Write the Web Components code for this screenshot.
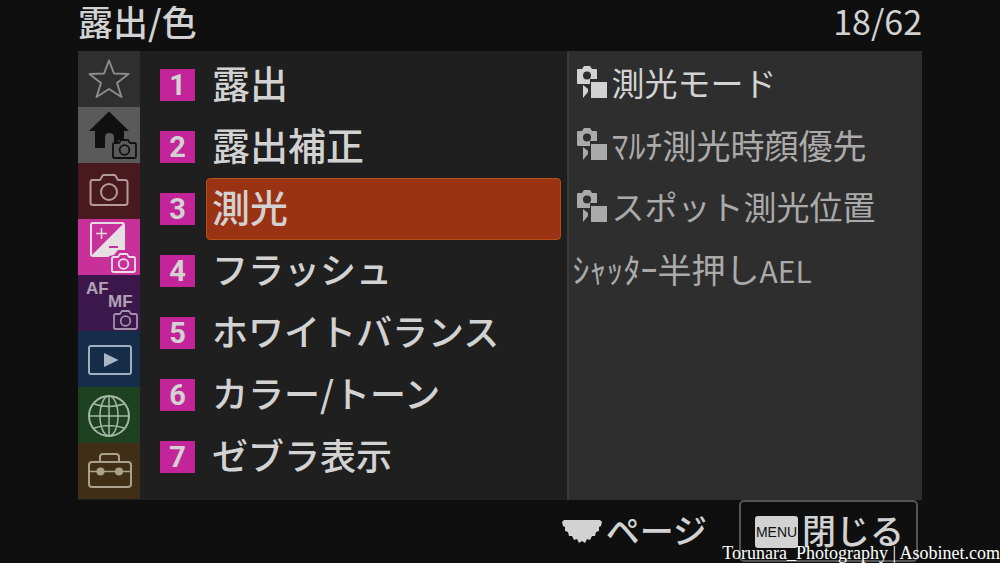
<!DOCTYPE html>
<html lang="ja">
<head>
<meta charset="utf-8">
<meta name="viewport" content="width=device-width, initial-scale=1">
<title>露出/色</title>
<style>
    body{
        margin: 0;
        min-height: 100vh;
        background: #0f0f0f;
        color: #d2d2d2;
        font-family: "Noto Sans CJK JP", "Noto Sans", sans-serif;
        font-weight: 500;
        overflow: hidden;
    }
</style>
</head>
<body>
<camera-menu heading="露出/色" page="18/62">
    <menu-tab slot="tabs" icon="star" label="マイメニュー" color="#2f2f2f"></menu-tab>
    <menu-tab slot="tabs" icon="home" label="メイン" color="#5a5a5a"></menu-tab>
    <menu-tab slot="tabs" icon="camera" label="撮影" color="#48191e"></menu-tab>
    <menu-tab slot="tabs" icon="exposure" label="露出/色" color="#c8319a"></menu-tab>
    <menu-tab slot="tabs" icon="focus" label="フォーカス" color="#3c174b"></menu-tab>
    <menu-tab slot="tabs" icon="play" label="再生" color="#152d49"></menu-tab>
    <menu-tab slot="tabs" icon="globe" label="ネットワーク" color="#1e4220"></menu-tab>
    <menu-tab slot="tabs" icon="toolbox" label="セットアップ" color="#402e16"></menu-tab>

    <menu-group slot="groups" number="1">露出</menu-group>
    <menu-group slot="groups" number="2">露出補正</menu-group>
    <menu-group slot="groups" number="3" selected>測光</menu-group>
    <menu-group slot="groups" number="4" kana>フラッシュ</menu-group>
    <menu-group slot="groups" number="5" kana>ホワイトバランス</menu-group>
    <menu-group slot="groups" number="6" kana>カラー/トーン</menu-group>
    <menu-group slot="groups" number="7" kana>ゼブラ表示</menu-group>

    <menu-entry slot="entries" mode active kana>測光モード</menu-entry>
    <menu-entry slot="entries" mode>ﾏﾙﾁ測光時顔優先</menu-entry>
    <menu-entry slot="entries" mode kana>スポット測光位置</menu-entry>
    <menu-entry slot="entries">ｼｬｯﾀｰ半押し<span class="latin">AEL</span></menu-entry>

    <menu-hints slot="hints"></menu-hints>
</camera-menu>
<photo-credit>Torunara_Photography | Asobinet.com</photo-credit>

<script>
// small camera outline, drawn in a 26x20 box
const miniCamera = (x, y, color) => `
    <g transform="translate(${x} ${y})" fill="none" stroke="${color}" stroke-width="1.8" stroke-linejoin="round">
        <path d="M2.500 4H7l2-3h7l2 3h4.500q1.500 0 1.500 1.500v12q0 1.500-1.500 1.500h-20Q1 19 1 17.500v-12Q1 4 2.500 4z"/>
        <circle cx="12.500" cy="11" r="4.800"/>
    </g>`

const icons = {
    star: `<path d="M31 9.500L36 22.500 50.500 23 39 32l4.500 14L31 38l-12.500 8L23 32 11.500 23 26 22.500z" fill="none" stroke="#8b8b8b" stroke-width="2" stroke-linejoin="round"/>`,
    home: `<path d="M31 4.500L51 24h-5v9h-5l-1.500 2H36v-5q0-4-4.500-4T27 30v11H17V24h-6z" fill="#101010"/>${miniCamera(34, 32, '#101010')}`,
    camera: `<g fill="none" stroke="#b59a9c" stroke-width="2" stroke-linejoin="round">
        <path d="M14.500 17H22l3-5h12l3 5h7q2.500 0 2.500 2.500v20q0 2.500-2.500 2.500H15q-2.500 0-2.500-2.500v-20q0-2.500 2-2.500z"/><circle cx="31" cy="29" r="8"/></g>`,
    exposure: `<rect x="13" y="4" width="33" height="33" rx="2" fill="#c8319a" stroke="#e6dce2" stroke-width="2"/>
        <path d="M46 4v33H13z" fill="#e6e0e4"/>
        <path d="M18 14.500h11M23.500 9v11" stroke="#e6dce2" stroke-width="1.500"/><path d="M31 28h9" stroke="#c8319a" stroke-width="2"/>
        <path d="M31 55V37l5-1 4-5h13l7 6v18z" fill="#c8319a"/>${miniCamera(33, 34, '#eadfe6')}`,
    focus: `<g fill="#b1a2b8" font-family="'Liberation Sans',sans-serif" font-size="17" font-weight="700">
        <text x="8" y="19">AF</text><text x="30" y="32">MF</text></g>${miniCamera(35, 35, '#a291aa')}`,
    play: `<rect x="11" y="15" width="42" height="28" rx="2" fill="none" stroke="#a0afbd" stroke-width="2"/><path d="M26 22l14.500 7L26 36z" fill="#a9b6c4"/>`,
    globe: `<g fill="none" stroke="#a3b8a5" stroke-width="1.500"><circle cx="31" cy="29" r="20" stroke-width="2"/>
        <ellipse cx="31" cy="29" rx="9" ry="20"/><path d="M31 9v40M11 29h40M16 17q15 5 30 0M16 41q15-5 30 0"/></g>`,
    toolbox: `<g fill="none" stroke="#aaa28d" stroke-width="2"><rect x="11" y="19" width="42" height="25" rx="3"/>
        <path d="M22 18v-4q0-3 3-3h13q3 0 3 3v4"/><path d="M11 28.500h42" stroke-width="1.500"/></g>
        <circle cx="22.500" cy="28.500" r="4" fill="#aaa28d"/><circle cx="41" cy="28.500" r="4" fill="#aaa28d"/>`
}

class CameraMenu extends HTMLElement {
    constructor() {
        super()
        this.attachShadow({ mode: "open" })
    }
    getTemplate() {
        const template = document.createElement("template")
        template.innerHTML = `
            <header>
                <h1>${this.getAttribute("heading")}</h1>
                <span>${this.getAttribute("page")}</span>
            </header>
            <main>
                <nav><slot name="tabs"></slot></nav>
                <section class="groups"><slot name="groups"></slot></section>
                <section class="entries"><slot name="entries"></slot></section>
            </main>
            <slot name="hints"></slot>
            ${this.getStyles()}
        `
        return template
    }
    getStyles() {
        return `
            <style>
            :host{
                display: block;
                padding: 0 7.8%;
            }
            header{
                display: flex;
                justify-content: space-between;
                font-size: 34px;
                line-height: 42px;
                padding-bottom: 9px;
            }
            header span{
                font-weight: 400;
            }
            h1{
                margin: 0;
                font: inherit;
                font-size: 35px;
            }
            main{
                display: grid;
                grid-template-columns: 62px minmax(0, 6fr) minmax(0, 5fr);
                background: #1f1f1f;
            }
            nav{
                display: flex;
                flex-direction: column;
            }
            section{
                display: flex;
                flex-direction: column;
            }
            .groups{
                padding: 3px 6px 12px 20px;
            }
            .entries{
                padding: 3px 4px;
                background: #2e2e2e;
                border-left: 2px solid #393939;
            }
            </style>
        `
    }
    connectedCallback() {
        this.shadowRoot.appendChild(this.getTemplate().content.cloneNode(true))
    }
}

class MenuTab extends HTMLElement {
    constructor() {
        super()
        this.attachShadow({ mode: "open" })
    }
    connectedCallback() {
        this.shadowRoot.innerHTML = `
            <style>
            :host{
                display: block;
            }
            button{
                display: block;
                width: 100%;
                padding: 0;
                border: 0;
                background: ${this.getAttribute("color")};
            }
            svg{
                display: block;
                width: 62px;
                height: 56px;
            }
            </style>
            <button aria-label="${this.getAttribute("label")}">
                <svg viewBox="0 0 62 56">${icons[this.getAttribute("icon")]}</svg>
            </button>
        `
    }
}

class MenuGroup extends HTMLElement {
    constructor() {
        super()
        this.attachShadow({ mode: "open" })
    }
    connectedCallback() {
        this.shadowRoot.innerHTML = `
            <style>
            :host{
                display: block;
            }
            button{
                display: flex;
                align-items: center;
                gap: 11px;
                width: 100%;
                padding: 0;
                border: 0;
                background: none;
                color: inherit;
                font: inherit;
                text-align: left;
            }
            .number{
                width: 35px;
                background: #c4249a;
                font-family: Roboto, sans-serif;
                font-size: 29px;
                font-weight: 700;
                line-height: 32px;
                text-align: center;
            }
            .name{
                flex: 1;
                padding: 0 5px 6px;
                border: 1px solid transparent;
                border-radius: 4px;
                font-size: 38px;
                line-height: 54px;
                white-space: nowrap;
            }
            :host([kana]) .name{
                font-size: 36px;
            }
            :host([selected]) .name{
                background: #993314;
                border-color: #b64f12;
            }
            </style>
            <button>
                <span class="number">${this.getAttribute("number")}</span>
                <span class="name"><slot></slot></span>
            </button>
        `
    }
}

class MenuEntry extends HTMLElement {
    constructor() {
        super()
        this.attachShadow({ mode: "open" })
    }
    connectedCallback() {
        // stills camera over a movie camera, with a square for the drive mode
        const mode = `
            <svg viewBox="0 0 32 34" aria-hidden="true">
                <path d="M2 4h4l2-3h6l2 3h4q1 0 1 1v9h-7v5H2q-1 0-1-1V5q0-1 1-1z" fill="currentColor"/>
                <circle cx="11" cy="10.500" r="4" fill="#2e2e2e"/>
                <path d="M7 20l5 4v3l-5 6z" fill="currentColor"/>
                <path d="M14 16h18v18H14z" fill="#2e2e2e"/>
                <path d="M15 17h16v16H15z" fill="currentColor"/>
            </svg>`
        this.shadowRoot.innerHTML = `
            <style>
            :host{
                display: block;
                color: #aaa;
            }
            :host([active]){
                color: #d2d2d2;
            }
            button{
                display: flex;
                align-items: center;
                gap: 4px;
                width: 100%;
                height: 62px;
                padding: 0 0 6px;
                border: 0;
                background: none;
                color: inherit;
                font: inherit;
                font-weight: 400;
                font-size: 34px;
                text-align: left;
                white-space: nowrap;
            }
            :host([kana]) button{
                font-size: 33px;
            }
            svg{
                width: 32px;
                height: 34px;
                margin-left: 3px;
            }
            ::slotted(.latin){
                font-size: 30px;
            }
            </style>
            <button>${this.hasAttribute("mode") ? mode : ""}<span><slot></slot></span></button>
        `
    }
}

class MenuHints extends HTMLElement {
    constructor() {
        super()
        this.attachShadow({ mode: "open" })
    }
    connectedCallback() {
        this.shadowRoot.innerHTML = `
            <style>
            :host{
                display: flex;
                justify-content: flex-end;
                align-items: center;
                gap: 32px;
                padding-right: 4px;
                font-size: 34px;
                line-height: 56px;
            }
            button{
                display: flex;
                align-items: center;
                gap: 3px;
                padding: 0 0 2px;
                border: 0;
                background: none;
                color: inherit;
                font: inherit;
                white-space: nowrap;
            }
            svg{
                width: 42px;
                height: 26px;
                margin-top: 4px;
            }
            .close{
                gap: 4px;
                padding: 0 12px 2px 14px;
                border: 2px solid #555;
                border-radius: 5px;
            }
            kbd{
                width: 43px;
                margin-top: 4px;
                border-radius: 3px;
                background: #d2d2d2;
                color: #111;
                font: 14px/32px "Liberation Sans", sans-serif;
                text-align: center;
            }
            </style>
            <button>
                <svg viewBox="0 0 42 26" aria-hidden="true">
                    <path d="M3 1H39L41 3 40 7 38 8 38 12 35 13 34 17 31 17 29 21 26 20 24 24 21 22 18 24 16 20 13 21 11 17 8 17 7 13 4 12 4 8 2 7 1 3z" fill="currentColor"/>
                </svg>
                <span>ページ</span>
            </button>
            <button class="close"><kbd>MENU</kbd><span>閉じる</span></button>
        `
    }
}

class PhotoCredit extends HTMLElement {
    constructor() {
        super()
        this.attachShadow({ mode: "open" })
        this.shadowRoot.innerHTML = `
            <style>
            :host{
                position: absolute;
                right: 0;
                bottom: 0;
                color: #fff;
                font: 18px/20px "Liberation Serif", serif;
                white-space: nowrap;
            }
            </style>
            <slot></slot>
        `
    }
}

customElements.define("camera-menu", CameraMenu)
customElements.define("menu-tab", MenuTab)
customElements.define("menu-group", MenuGroup)
customElements.define("menu-entry", MenuEntry)
customElements.define("menu-hints", MenuHints)
customElements.define("photo-credit", PhotoCredit)
</script>
</body>
</html>
